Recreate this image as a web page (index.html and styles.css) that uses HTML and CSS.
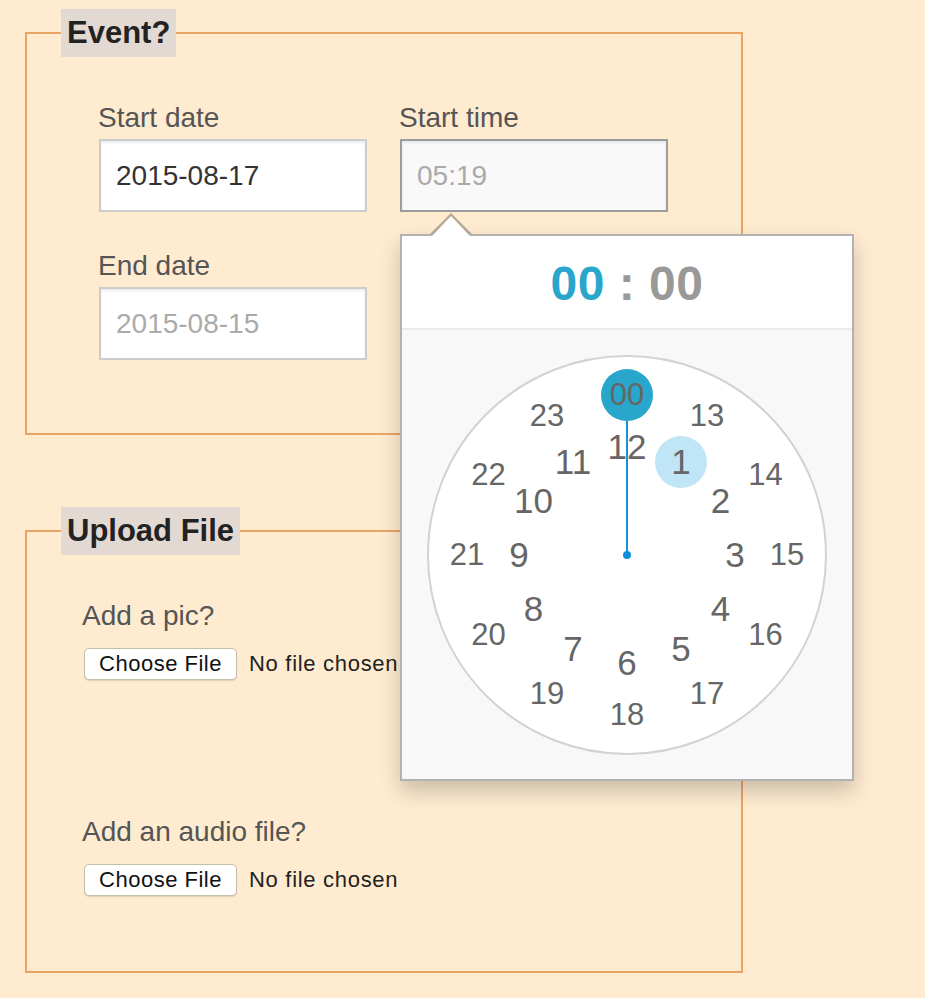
FILE: index.html
```html
<!DOCTYPE html>
<html lang="en">
<head>
<meta charset="utf-8">
<title>Event form</title>
<link rel="stylesheet" href="styles.css">
</head>
<body>
<div class="page">
  <fieldset class="group">
    <legend class="group-title">Event?</legend>
    <div class="event-body">
      <div class="field">
        <label class="field-label">Start date</label>
        <input class="text-input" type="text" value="2015-08-17">
      </div>
      <div class="field">
        <label class="field-label">Start time</label>
        <div class="time-wrap">
          <input class="text-input time-input" type="text" placeholder="05:19">
          <div class="clock-popover">
            <div class="clock-title"><span class="clock-hours">00</span> : <span class="clock-minutes">00</span></div>
            <div class="clock-body">
              <div class="dial">
                <svg class="dial-canvas" width="396" height="396" viewBox="0 0 396 396">
                  <line x1="198" y1="198" x2="198" y2="64" stroke="#1592d8" stroke-width="2" stroke-linecap="round"/>
                  <circle cx="198" cy="38" r="26" fill="#29a6cc"/>
                  <circle cx="198" cy="198" r="4" fill="#0b8fdb"/>
                </svg>
                <div class="tick outer" style="left:172px;top:12px">00</div>
                <div class="tick inner hover" style="left:226px;top:78.5px">1</div>
                <div class="tick inner" style="left:265.5px;top:118px">2</div>
                <div class="tick inner" style="left:280px;top:172px">3</div>
                <div class="tick inner" style="left:265.5px;top:226px">4</div>
                <div class="tick inner" style="left:226px;top:265.5px">5</div>
                <div class="tick inner" style="left:172px;top:280px">6</div>
                <div class="tick inner" style="left:118px;top:265.5px">7</div>
                <div class="tick inner" style="left:78.5px;top:226px">8</div>
                <div class="tick inner" style="left:64px;top:172px">9</div>
                <div class="tick inner" style="left:78.5px;top:118px">10</div>
                <div class="tick inner" style="left:118px;top:78.5px">11</div>
                <div class="tick inner" style="left:172px;top:64px">12</div>
                <div class="tick outer" style="left:252px;top:33.4px">13</div>
                <div class="tick outer" style="left:310.6px;top:92px">14</div>
                <div class="tick outer" style="left:332px;top:172px">15</div>
                <div class="tick outer" style="left:310.6px;top:252px">16</div>
                <div class="tick outer" style="left:252px;top:310.6px">17</div>
                <div class="tick outer" style="left:172px;top:332px">18</div>
                <div class="tick outer" style="left:92px;top:310.6px">19</div>
                <div class="tick outer" style="left:33.4px;top:252px">20</div>
                <div class="tick outer" style="left:12px;top:172px">21</div>
                <div class="tick outer" style="left:33.4px;top:92px">22</div>
                <div class="tick outer" style="left:92px;top:33.4px">23</div>
              </div>
            </div>
          </div>
        </div>
      </div>
      <div class="field">
        <label class="field-label">End date</label>
        <input class="text-input" type="text" placeholder="2015-08-15">
      </div>
      <div class="field">
        <label class="field-label">End time</label>
        <input class="text-input time-input" type="text" placeholder="05:19">
      </div>
    </div>
  </fieldset>

  <fieldset class="group upload">
    <legend class="group-title">Upload File</legend>
    <div class="upload-body">
      <div class="file-field">
        <label class="field-label">Add a pic?</label>
        <div class="file-row">
          <button class="file-btn" type="button">Choose File</button>
          <span class="file-status">No file chosen</span>
        </div>
      </div>
      <div class="file-field">
        <label class="field-label">Add an audio file?</label>
        <div class="file-row">
          <button class="file-btn" type="button">Choose File</button>
          <span class="file-status">No file chosen</span>
        </div>
      </div>
    </div>
  </fieldset>
</div>
</body>
</html>
```
FILE: styles.css
```css
* { box-sizing: border-box; }

html, body {
  margin: 0;
  padding: 0;
  background: #feebd0;
}

body {
  font-family: "Liberation Sans", Arial, Helvetica, sans-serif;
  color: #555;
  width: 925px;
  height: 998px;
  overflow: hidden;
}

.page {
  padding-top: 9px;
}

.group {
  margin: 0 0 0 25px;
  padding: 0;
  width: 718px;
  border: 2px solid #eaa566;
  min-width: 0;
}

.group.upload {
  margin-top: 72px;
}

.group-title {
  margin-left: 34px;
  padding: 0 6px;
  background: #e3d9d3;
  color: #222;
  font-size: 31px;
  font-weight: bold;
  line-height: 48px;
}

.event-body {
  display: grid;
  grid-template-columns: 268px 268px;
  column-gap: 33px;
  row-gap: 38px;
  padding: 45px 0 73px 72px;
}

.field-label {
  display: block;
  font-size: 28px;
  line-height: 32px;
  color: #555;
  margin-bottom: 5px;
}

.field .field-label {
  margin-left: -1px;
}

.text-input {
  display: block;
  width: 268px;
  height: 73px;
  margin: 0;
  padding: 0 15px;
  border: 2px solid #cccccc;
  border-radius: 0;
  background: #fff;
  box-shadow: inset 0 2px 3px rgba(0, 0, 0, 0.075);
  font-family: "Liberation Sans", Arial, Helvetica, sans-serif;
  font-size: 28px;
  color: #333;
  outline: none;
}

.text-input::placeholder {
  color: #aaa;
}

.time-input {
  background: #f9f9f9;
  border-color: #9c9c9c;
}

.time-wrap {
  position: relative;
}

/* clock picker popover */
.clock-popover {
  position: absolute;
  top: calc(100% + 22px);
  left: 0;
  z-index: 10;
  width: 454px;
  background: #fff;
  border: 2px solid rgba(0, 0, 0, 0.3);
  box-shadow: 0 10px 20px rgba(0, 0, 0, 0.2);
}

.clock-popover::before,
.clock-popover::after {
  content: "";
  position: absolute;
  width: 0;
  height: 0;
  border-style: solid;
  border-color: transparent;
}

.clock-popover::before {
  top: -23px;
  left: 28px;
  border-width: 0 21px 21px 21px;
  border-bottom-color: rgba(0, 0, 0, 0.28);
}

.clock-popover::after {
  top: -20px;
  left: 30px;
  border-width: 0 19px 20px 19px;
  border-bottom-color: #fff;
}

.clock-title {
  height: 94px;
  padding: 18px 28px 14px;
  border-bottom: 2px solid #ebebeb;
  text-align: center;
  font-size: 48px;
  font-weight: bold;
  line-height: 60px;
  letter-spacing: 0.5px;
  color: #999;
}

.clock-hours {
  color: #29a6cc;
}

.clock-body {
  background: #f8f8f8;
  padding: 25px 0 24px;
}

.dial {
  position: relative;
  width: 400px;
  height: 400px;
  margin: 0 auto;
  border: 2px solid #d2d2d2;
  border-radius: 50%;
  background: #fff;
}

.dial-canvas {
  position: absolute;
  top: 0;
  left: 0;
}

.tick {
  position: absolute;
  width: 52px;
  height: 52px;
  line-height: 52px;
  text-align: center;
  border-radius: 50%;
  color: #666;
  font-size: 31px;
}

.tick.inner {
  font-size: 35px;
}

.tick.hover {
  background: #c0e5f7;
}

/* upload */
.upload-body {
  padding: 45px 0 75px 55px;
}

.file-field + .file-field {
  margin-top: 136px;
}

.file-field .field-label {
  margin-bottom: 16px;
}

.file-row {
  display: flex;
  align-items: center;
  padding-left: 2px;
}

.file-btn {
  height: 32px;
  width: 153px;
  padding: 0;
  border: 1px solid #c4bcad;
  border-radius: 5px;
  background: #fff;
  box-shadow: 0 1px 1px rgba(0, 0, 0, 0.12);
  font-family: "Liberation Sans", Arial, Helvetica, sans-serif;
  font-size: 22px;
  letter-spacing: 0.5px;
  color: #111;
}

.file-status {
  margin-left: 12px;
  font-size: 22px;
  letter-spacing: 0.7px;
  color: #222;
}
```
